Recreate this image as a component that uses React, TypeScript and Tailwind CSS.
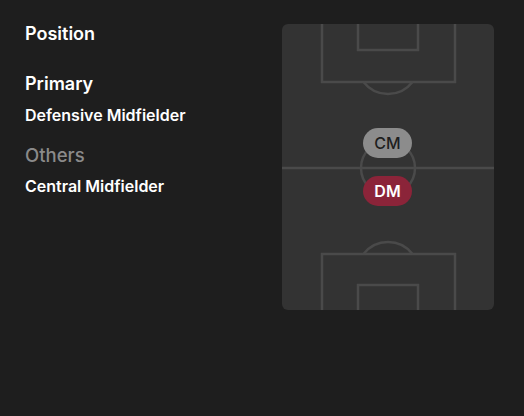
export default function App() {
  return (
    <div
      className="w-[524px] h-[416px] bg-[#1e1e1e] flex items-start pt-[22px] pl-[25px]"
      style={{ fontFamily: "Inter, 'Noto Sans', sans-serif" }}
    >
      {/* LEFT TEXT */}
      <div className="w-[257px] flex flex-col text-white">
        <h2 className="text-[18px] leading-[24px] font-semibold">Position</h2>
        <h3 className="mt-[26px] text-[18px] leading-[24px] font-semibold">Primary</h3>
        <p className="mt-[9px] text-[16px] leading-[20px] font-semibold">Defensive Midfielder</p>
        <h3 className="mt-[18px] text-[18.5px] leading-[24px] font-medium text-[#8a8a8a]">Others</h3>
        <p className="mt-[9px] text-[16px] leading-[20px] font-semibold">Central Midfielder</p>
      </div>

      {/* PITCH */}
      <div className="relative mt-[2px] w-[212px] h-[286px] rounded-[6px] overflow-hidden bg-[#333333]">
        <svg width="212" height="286" viewBox="0 0 212 286" className="absolute inset-0" fill="none" stroke="#4a4a4a" strokeWidth="2.5">
          <rect x="40" y="-4" width="133" height="62" />
          <rect x="76" y="-4" width="60" height="30" />
          <path d="M 81.5 58 A 31 31 0 0 0 130.5 58" />
          <line x1="0" y1="144" x2="212" y2="144" />
          <circle cx="106" cy="144" r="27" />
          <rect x="40" y="230" width="133" height="62" />
          <rect x="76" y="261" width="60" height="30" />
          <path d="M 81.5 230 A 31 31 0 0 1 130.5 230" />
        </svg>

        <div className="absolute left-[81px] top-[104px] w-[49px] h-[30px] rounded-full bg-[#8c8c8c] text-[#1e1e1e] text-[16px] font-medium flex items-center justify-center">
          CM
        </div>
        <div className="absolute left-[81px] top-[152px] w-[49px] h-[30px] rounded-full bg-[#8b2439] text-white text-[16px] font-semibold flex items-center justify-center">
          DM
        </div>
      </div>
    </div>
  );
}
